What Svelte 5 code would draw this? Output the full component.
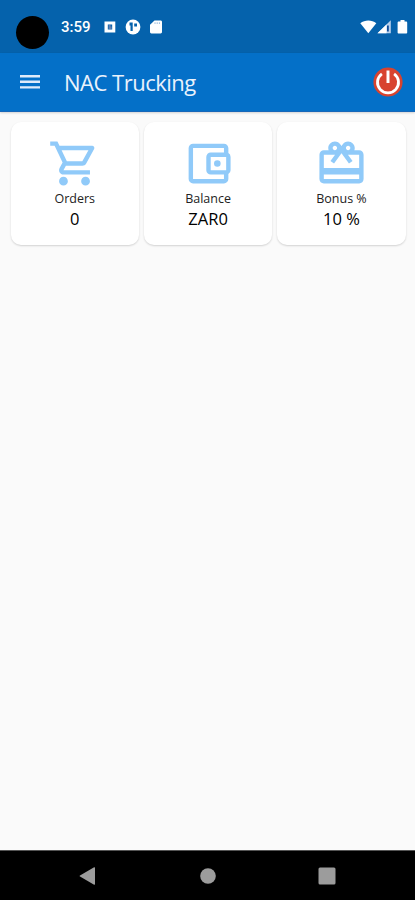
<script lang="ts">
  let title = $state("NAC Trucking");
  let time = $state("3:59");

  const stats = [
    {
      label: "Orders",
      value: "0",
      icon: "M15.55 13c.75 0 1.41-.41 1.75-1.03l3.58-6.49A.996.996 0 0 0 20.01 4H5.21l-.94-2H1v2h2l3.6 7.59-1.35 2.44C4.52 15.37 5.48 17 7 17h12v-2H7l1.1-2h7.45zM6.16 6h12.15l-2.76 5H8.53L6.16 6zM7 18c-1.1 0-1.99.9-1.99 2S5.9 22 7 22s2-.9 2-2-.9-2-2-2zm10 0c-1.1 0-1.99.9-1.99 2s.89 2 1.99 2 2-.9 2-2-.9-2-2-2z"
    },
    {
      label: "Balance",
      value: "ZAR0",
      icon: "M21 7.28V5c0-1.1-.9-2-2-2H5c-1.11 0-2 .9-2 2v14c0 1.1.89 2 2 2h14c1.1 0 2-.9 2-2v-2.28A2 2 0 0 0 22 15V9a2 2 0 0 0-1-1.72zM20 9v6h-7V9h7zM5 19V5h14v2h-6c-1.1 0-2 .9-2 2v6c0 1.1.9 2 2 2h6v2H5zM16 10.5a1.5 1.5 0 1 0 0 3 1.5 1.5 0 0 0 0-3z"
    },
    {
      label: "Bonus %",
      value: "10 %",
      icon: "M20 6h-2.18c.11-.31.18-.65.18-1 0-1.66-1.34-3-3-3-1.05 0-1.96.54-2.5 1.35l-.5.67-.5-.68C10.96 2.54 10.05 2 9 2 7.34 2 6 3.34 6 5c0 .35.07.69.18 1H4c-1.11 0-1.99.89-1.99 2L2 19c0 1.11.89 2 2 2h16c1.11 0 2-.89 2-2V8c0-1.11-.89-2-2-2zm-5-2c.55 0 1 .45 1 1s-.45 1-1 1-1-.45-1-1 .45-1 1-1zM9 4c.55 0 1 .45 1 1s-.45 1-1 1-1-.45-1-1 .45-1 1-1zm11 15H4v-2h16v2zm0-5H4V8h5.08L7 10.83 8.62 12 12 7.4l3.38 4.6L17 10.83 14.92 8H20v6z"
    }
  ];
</script>

<div class="screen">
  <div class="status-bar">
    <span class="camera"></span>
    <span class="time">{time}</span>
    <svg class="notifications" width="60" height="16" viewBox="0 0 60 16">
      <path fill="#fff" fill-rule="evenodd" d="M.5 2.5h10.800v11H.5zM3.800 5.500v5h4.400v-5z" />
      <path fill="#5f80b4" d="M4.600 6h2v1.400h1v2.600h-3z" />
      <circle cx="29" cy="8" r="7.4" fill="#fff" />
      <path fill="#0562ac" d="M25.500 3.500h3.200v8.500h-2.200V6.500h-1zM30.200 4.500H33v3h-2.800z" />
      <path fill="#fff" d="M50.500 1.500h6.100c.8 0 1.400.6 1.400 1.400v10.200c0 .8-.6 1.400-1.400 1.400h-9.200c-.8 0-1.400-.6-1.400-1.400V5.800z" />
      <path stroke="#7fa9d3" stroke-width=".8" d="M51 3.300v1.700M53.200 3.300v1.700M55.400 3.300v1.700" />
    </svg>
    <svg class="system" width="48" height="16" viewBox="0 0 48 16">
      <path fill="#fff" d="M.3 4.300C4.800.7 11.800.7 16.300 4.300L8.300 14.300z" />
      <path fill="#b8d0ec" d="M30.800 1.200V14.200H17.500z" />
      <path fill="#fff" d="M26.500 5.500v8.700h-9z" />
      <path fill="#0c4c9b" d="M27 6.500h1.800v6H27z" />
      <path fill="#fff" d="M40.500 1h4v1.400h1.500c.7 0 1.200.5 1.200 1.100v9.900c0 .7-.5 1.100-1.200 1.100h-7.200c-.7 0-1.200-.5-1.200-1.100V3.500c0-.6.5-1.100 1.200-1.100h1.700z" />
    </svg>
  </div>

  <header class="app-bar">
    <button class="menu-btn" aria-label="Menu">
      <svg width="22" height="16" viewBox="0 0 22 16">
        <path fill="#dfebfa" d="M1 1h20v2.400H1zM1 6.600h20V9H1zM1 12.200h20v2.400H1z" />
      </svg>
    </button>
    <h1>{title}</h1>
    <button class="power-btn" aria-label="Log out">
      <svg width="30" height="30" viewBox="0 0 30 30">
        <circle cx="15" cy="15" r="14.6" fill="#d8432f" />
        <g fill="none" stroke="#fff" stroke-width="2.8">
          <path d="M8.900 6.800a10.500 10.500 0 1 0 12.200 0" />
          <path stroke-width="3" d="M15 3.500V16" />
        </g>
      </svg>
    </button>
  </header>

  <main class="content">
    <div class="cards">
      {#each stats as stat}
        <div class="card">
          <svg class="card-icon" viewBox="0 0 24 24"><path d={stat.icon} /></svg>
          <span class="label">{stat.label}</span>
          <span class="value">{stat.value}</span>
        </div>
      {/each}
    </div>
  </main>

  <nav class="nav-bar">
    <svg width="18" height="18" viewBox="0 0 18 18"><path d="M16 .7v16.600c0 .4-.5.6-.9.4L1 9.600a.7.7 0 0 1 0-1.200L15.100.3c.4-.2.9 0 .9.4z" /></svg>
    <svg width="18" height="18" viewBox="0 0 18 18"><circle cx="9" cy="9" r="7.8" /></svg>
    <svg width="18" height="18" viewBox="0 0 18 18"><rect x=".5" y=".5" width="17" height="17" rx="1.5" /></svg>
  </nav>
</div>

<style>
  :global(body) { margin: 0; }
  .screen {
    display: flex;
    flex-direction: column;
    width: 415px;
    height: 900px;
    background: #fafafa;
    font-family: "Open Sans", "Noto Sans", sans-serif;
    overflow: hidden;
  }
  .status-bar {
    display: flex;
    align-items: center;
    box-sizing: border-box;
    height: 53px;
    padding: 0 7px 0 16px;
    background: #0562ac;
  }
  .camera {
    width: 33px;
    height: 33px;
    margin-top: 12px;
    border-radius: 50%;
    background: #000;
  }
  .time {
    width: 43px;
    margin-left: 12px;
    color: #fff;
    font: 500 15px/18px Roboto, sans-serif;
  }
  .system { margin-left: auto; }
  .app-bar {
    display: flex;
    align-items: center;
    box-sizing: border-box;
    height: 59px;
    padding: 0 12px 1px 19px;
    background: #0470c8;
    border-bottom: 1px solid #1767b9;
    box-shadow: 0 1px 2px rgba(0, 0, 0, 0.16);
  }
  button {
    display: flex;
    padding: 0;
    border: none;
    background: none;
    cursor: pointer;
  }
  h1 {
    margin: 0 auto 0 23px;
    color: #e9f2fc;
    font-size: 22px;
    font-weight: 400;
    line-height: 30px;
    letter-spacing: -0.5px;
  }
  .content {
    flex: 1;
    padding: 10px 9.4px 0 10.6px;
  }
  .cards {
    display: grid;
    grid-template-columns: repeat(3, 1fr);
    gap: 5px;
  }
  .card {
    display: flex;
    flex-direction: column;
    align-items: center;
    box-sizing: border-box;
    height: 123px;
    padding-top: 15px;
    border-radius: 10px;
    background: #fff;
    box-shadow: 0 1px 2px rgba(0, 0, 0, 0.16);
  }
  .card-icon {
    width: 53px;
    height: 53px;
    fill: #90caf9;
  }
  .label {
    margin-top: 1px;
    color: #222;
    font-size: 12.5px;
    line-height: 16px;
  }
  .value {
    color: #000;
    font-size: 16.5px;
    line-height: 24px;
  }
  .nav-bar {
    display: flex;
    justify-content: space-between;
    align-items: center;
    box-sizing: border-box;
    height: 50px;
    padding: 0 79px;
    border-top: 1px solid #555;
    background: #000;
    fill: #9c9c9c;
  }
</style>
